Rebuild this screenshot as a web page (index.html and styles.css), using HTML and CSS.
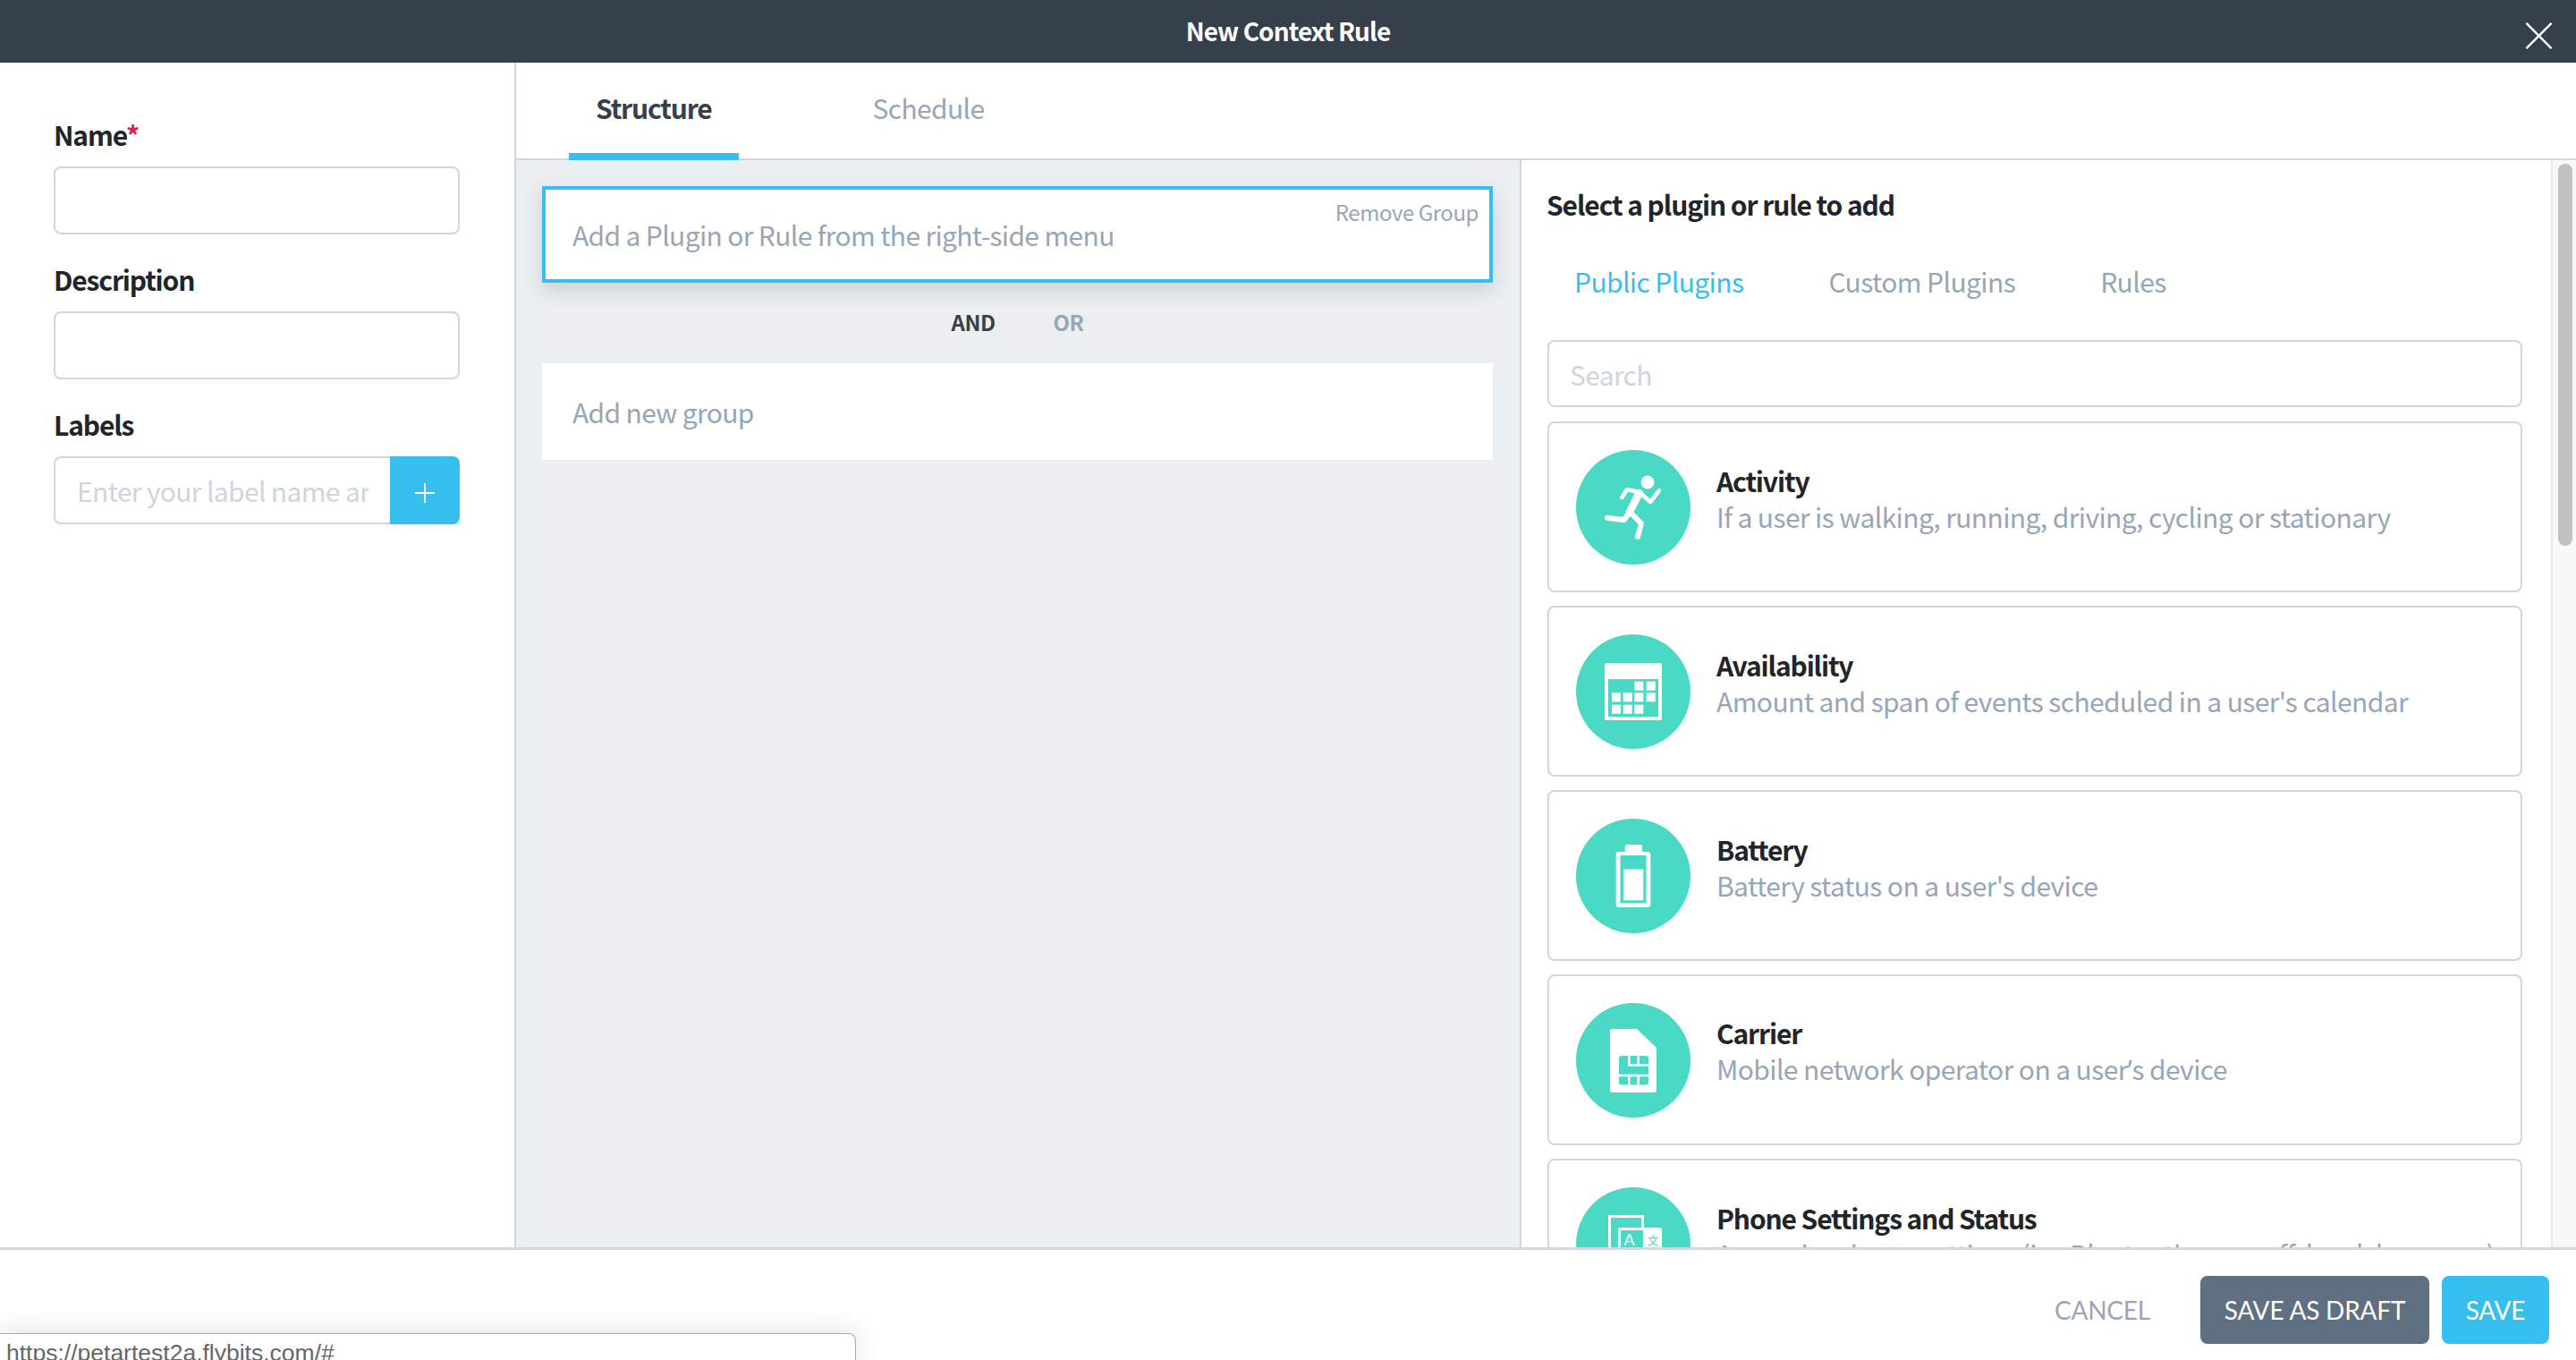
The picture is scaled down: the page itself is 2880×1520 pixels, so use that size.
FILE: index.html
```html
<!DOCTYPE html>
<html lang="en">
<head>
<meta charset="utf-8">
<title>New Context Rule</title>
<link rel="stylesheet" href="styles.css">
</head>
<body>
<div class="app">
  <header class="topbar">
    <span class="topbar-title">New Context Rule</span>
    <svg class="close" viewBox="0 0 32 32"><path d="M1 1L31 31M31 1L1 31"/></svg>
  </header>
  <main class="main">
    <aside class="sidebar">
      <div class="field">
        <label class="label">Name<span class="req">*</span></label>
        <input class="input" type="text">
      </div>
      <div class="field">
        <label class="label">Description</label>
        <input class="input" type="text">
      </div>
      <div class="field">
        <label class="label">Labels</label>
        <div class="label-input">
          <input class="input input-join" type="text" placeholder="Enter your label name and press enter">
          <button class="add-btn"><svg viewBox="0 0 22 22"><path d="M11 0V22M0 11H22"/></svg></button>
        </div>
      </div>
    </aside>
    <section class="content">
      <nav class="tabs">
        <a class="tab tab-active">Structure</a>
        <a class="tab">Schedule</a>
      </nav>
      <div class="panes">
        <div class="builder">
          <div class="group group-active">
            <span class="group-text">Add a Plugin or Rule from the right-side menu</span>
            <a class="remove">Remove Group</a>
          </div>
          <div class="ops"><span class="op op-on">AND</span><span class="op">OR</span></div>
          <div class="group"><span class="group-text">Add new group</span></div>
        </div>
        <div class="picker">
          <h2 class="picker-title">Select a plugin or rule to add</h2>
          <div class="subtabs">
            <a class="subtab subtab-on">Public Plugins</a>
            <a class="subtab">Custom Plugins</a>
            <a class="subtab">Rules</a>
          </div>
          <input class="input search" type="text" placeholder="Search">
          <div class="cards">
            <div class="card">
              <svg class="ico" viewBox="0 0 128 128">
                <circle class="c" cx="64" cy="64" r="64"/>
                <circle class="w" cx="80" cy="36" r="7.5"/>
                <path class="s s4" d="M51.300 53L57 44L71.300 47.300L83 58L93 45.300"/>
                <path class="s s8" d="M70.700 48L59.700 69.700"/>
                <path class="s s5" d="M59.700 69.700L53.700 78L34.700 75.700M61.300 70.300L73 82L69 96.700"/>
              </svg>
              <div class="card-text"><div class="card-title">Activity</div><div class="card-desc">If a user is walking, running, driving, cycling or stationary</div></div>
            </div>
            <div class="card">
              <svg class="ico" viewBox="0 0 128 128">
                <circle class="c" cx="64" cy="64" r="64"/>
                <rect class="w" x="32" y="32" width="64" height="64" rx="2"/>
                <rect class="c" x="36" y="50" width="56" height="42"/>
                <g class="w">
                  <rect x="65.300" y="52.700" width="10" height="10"/><rect x="78.700" y="52.700" width="10" height="10"/>
                  <rect x="40" y="65.300" width="10" height="10"/><rect x="52.700" y="65.300" width="10" height="10"/><rect x="65.300" y="65.300" width="10" height="10"/><rect x="78.700" y="65.300" width="10" height="10"/>
                  <rect x="40" y="78.700" width="10" height="10"/><rect x="52.700" y="78.700" width="10" height="10"/><rect x="65.300" y="78.700" width="10" height="10"/>
                </g>
              </svg>
              <div class="card-text"><div class="card-title">Availability</div><div class="card-desc">Amount and span of events scheduled in a user's calendar</div></div>
            </div>
            <div class="card">
              <svg class="ico" viewBox="0 0 128 128">
                <circle class="c" cx="64" cy="64" r="64"/>
                <rect class="w" x="54.700" y="29" width="19.300" height="12" rx="2"/>
                <rect class="w" x="44.700" y="37" width="38.600" height="62" rx="3"/>
                <rect class="c" x="49.500" y="41" width="29" height="53.500"/>
                <rect class="w" x="53" y="56.500" width="22.300" height="34.800"/>
              </svg>
              <div class="card-text"><div class="card-title">Battery</div><div class="card-desc">Battery status on a user's device</div></div>
            </div>
            <div class="card">
              <svg class="ico" viewBox="0 0 128 128">
                <circle class="c" cx="64" cy="64" r="64"/>
                <path class="w" d="M40 29H68L90 50V97Q90 100 87 100H41Q38 100 38 97V31Q38 29 40 29Z"/>
                <rect class="c" x="48" y="59" width="33" height="32.500" rx="3"/>
                <path class="l" d="M59.300 59V69.400H81M69.700 59V69.400M48 80.900H81M59.300 80.900V91.500M69.700 80.900V91.500"/>
              </svg>
              <div class="card-text"><div class="card-title">Carrier</div><div class="card-desc">Mobile network operator on a user<span class="apos">’</span>s device</div></div>
            </div>
            <div class="card">
              <svg class="ico" viewBox="0 0 128 128">
                <circle class="c" cx="64" cy="64" r="64"/>
                <path class="o" d="M37.500 90V32.500H74.500V46"/>
                <rect class="o" x="48.500" y="46.500" width="28" height="44"/>
                <path class="w" d="M76 45H94Q96 45 96 47V90H76Z"/>
                <text class="glyph" x="53.500" y="65">A</text>
                <text class="glyph-cjk" x="79.500" y="64">文</text>
              </svg>
              <div class="card-text"><div class="card-title">Phone Settings and Status</div><div class="card-desc">Access hardware settings (i.e. Bluetooth on or off, local, language)</div></div>
            </div>
          </div>
        </div>
        <div class="scroll-track"><div class="scroll-thumb"></div></div>
      </div>
    </section>
  </main>
  <footer class="footer">
    <a class="cancel">CANCEL</a>
    <button class="btn btn-draft">SAVE AS DRAFT</button>
    <button class="btn btn-save">SAVE</button>
  </footer>
  <div class="status">https://petartest2a.flybits.com/#</div>
</div>
</body>
</html>
```
FILE: styles.css
```css
* { box-sizing: border-box; }
html, body { margin: 0; height: 100%; overflow: hidden; }
body { font-family: "Noto Sans CJK SC", "Noto Sans", sans-serif; font-size: 30px; letter-spacing: -0.65px; color: #212529; background: #fff; }
.app { position: relative; height: 1520px; display: flex; flex-direction: column; overflow: hidden; }

.topbar { height: 70px; flex: none; background: #36404a; display: flex; align-items: center; justify-content: center; position: relative; }
.topbar-title { color: #fff; font-size: 28px; font-weight: 600; line-height: 36px; margin-top: -2px; letter-spacing: -0.95px; }
.close { position: absolute; right: 26px; top: 25px; width: 31px; height: 30px; }
.close path { stroke: #fff; stroke-width: 2.5; fill: none; }

.main { flex: 1; min-height: 0; display: flex; }
.sidebar { width: 577px; flex: none; border-right: 2px solid #d0d7de; padding: 60px 61px 0 60px; }
.field { margin-bottom: 30px; }
.label { display: block; font-weight: 600; line-height: 40px; letter-spacing: -1.15px; margin-bottom: 16px; }
.req { color: #e8184a; }
.input { display: block; width: 100%; height: 76px; border: 2px solid #cfd6dd; border-radius: 8px; background: #fff; padding: 0 24px; font: inherit; letter-spacing: inherit; color: #212529; outline: none; }
.input::placeholder { color: #cfd5db; opacity: 1; }
.label-input { display: flex; }
.input-join { flex: 1; min-width: 0; border-right: 0; border-radius: 8px 0 0 8px; }
.add-btn { width: 78px; flex: none; height: 76px; border: 0; padding: 0; background: #36bfee; border-radius: 0 8px 8px 0; display: flex; align-items: center; justify-content: center; }
.add-btn svg { width: 22px; height: 22px; margin-top: 6px; }
.add-btn path { stroke: #fff; stroke-width: 2; fill: none; }

.content { flex: 1; min-width: 0; display: flex; flex-direction: column; }
.tabs { height: 109px; flex: none; border-bottom: 2px solid #d0d7de; display: flex; padding-left: 59px; gap: 120px; }
.tab { padding: 28px 30px 0; height: 109px; line-height: 44px; color: #97a6b6; }
.tab-active { color: #36404a; font-weight: 600; letter-spacing: -1.15px; border-bottom: 8px solid #36bfee; }

.panes { flex: 1; min-height: 0; display: flex; }
.builder { width: 1124px; flex: none; background: #ebeff2; border-right: 2px solid #d0d7de; padding: 29px 30px 0 29px; }
.group { position: relative; height: 108px; background: #fff; display: flex; align-items: center; padding-left: 34px; }
.group-active { border: 4px solid #36bfee; padding-left: 30px; box-shadow: 0 8px 20px rgba(54, 64, 74, .18); }
.group-text { color: #97a6b6; }
.remove { position: absolute; right: 12px; top: 7px; font-size: 24px; line-height: 36px; letter-spacing: -0.45px; color: #97a6b6; }
.ops { height: 90px; display: flex; align-items: center; justify-content: center; gap: 65px; padding-bottom: 3px; }
.op { font-size: 24px; font-weight: 600; letter-spacing: -0.5px; color: #97a6b6; }
.op-on { color: #36404a; }

.picker { flex: 1; min-width: 0; overflow: hidden; padding: 29px 32px 0 29px; }
.picker-title { margin: 0 0 46px -1px; font-size: 30px; font-weight: 600; line-height: 40px; letter-spacing: -1.1px; }
.subtabs { display: flex; gap: 95px; padding-left: 30px; height: 40px; margin-bottom: 46px; line-height: 40px; letter-spacing: -0.6px; color: #97a6b6; }
.subtab-on { color: #36bfee; }
.search { height: 75px; margin-bottom: 16px; padding-left: 23px; }
.cards { display: flex; flex-direction: column; gap: 15px; }
.card { height: 191px; flex: none; border: 2px solid #cfd6dd; border-radius: 8px; display: flex; align-items: center; padding-left: 30px; gap: 29px; }
.ico { width: 128px; height: 128px; flex: none; }
.c { fill: #49d9c5; }
.w { fill: #fff; }
.s { fill: none; stroke: #fff; stroke-linecap: round; stroke-linejoin: round; }
.s4 { stroke-width: 4.500; }
.s5 { stroke-width: 6; }
.s8 { stroke-width: 8.500; }
.l { fill: none; stroke: #fff; stroke-width: 2.500; }
.o { fill: none; stroke: #fff; stroke-width: 3; }
.glyph { font-family: "Liberation Sans", sans-serif; font-size: 18px; letter-spacing: 0; fill: #fff; }
.glyph-cjk { font-family: "Noto Sans CJK SC", sans-serif; font-size: 13px; letter-spacing: 0; fill: #49d9c5; }
.card-text { padding-bottom: 20px; }
.card-title { font-weight: 600; line-height: 40px; letter-spacing: -1.15px; }
.card-desc { line-height: 40px; letter-spacing: -0.6px; color: #97a6b6; white-space: nowrap; }
.apos { font-family: "Noto Sans", sans-serif; }

.scroll-track { width: 28px; flex: none; background: #f8f8f8; border-left: 2px solid #e8e8e8; padding: 4px 4px 0 6px; }
.scroll-thumb { height: 427px; background: #c1c1c1; border-radius: 8px; }

.footer { height: 126px; flex: none; border-top: 3px solid #d0d7de; display: flex; align-items: flex-start; justify-content: flex-end; padding: 29px 30px 0 0; background: #fff; }
.cancel { font-family: Lato, sans-serif; font-size: 28px; letter-spacing: -0.2px; line-height: 76px; color: #97a6b6; margin-right: 56px; }
.btn { height: 76px; border: 0; border-radius: 8px; color: #fff; font-family: Lato, sans-serif; font-size: 28px; letter-spacing: -0.2px; padding: 0; }
.btn-draft { width: 256px; background: #5f7082; margin-right: 14px; }
.btn-save { width: 120px; background: #36bfee; }

.status { position: absolute; left: 0; bottom: 0; width: 957px; height: 30px; overflow: hidden; background: #fff; border: 1px solid #aaa; border-left: 0; border-bottom: 0; border-radius: 0 8px 0 0; box-shadow: 0 0 30px rgba(0, 0, 0, .14); padding-left: 7px; font-family: "Liberation Sans", sans-serif; font-size: 26.500px; letter-spacing: 0; line-height: 42px; color: #666; }
```
